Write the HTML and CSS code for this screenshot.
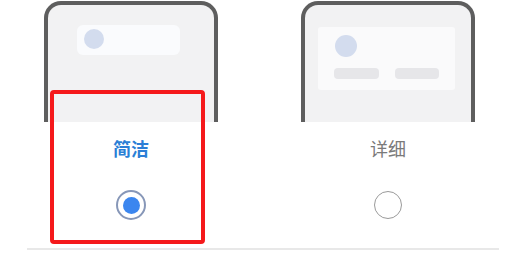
FILE: index.html
```html
<!DOCTYPE html>
<html lang="zh-CN">
<head>
<meta charset="utf-8">
<title>样式选择</title>
<link rel="stylesheet" href="styles.css">
</head>
<body>
<div class="stage">
  <div class="options">
    <div class="option">
      <div class="phone">
        <div class="pill"><span class="avatar small"></span></div>
      </div>
      <div class="label active">简洁</div>
      <div class="radio checked"><span class="dot"></span></div>
    </div>
    <div class="option">
      <div class="phone">
        <div class="card">
          <span class="avatar big"></span>
          <div class="bars"><span class="bar"></span><span class="bar"></span></div>
        </div>
      </div>
      <div class="label">详细</div>
      <div class="radio"></div>
    </div>
  </div>
  <div class="divider"></div>
  <div class="highlight"></div>
</div>
</body>
</html>
```

FILE: styles.css
```css
html, body {
  margin: 0;
  padding: 0;
  background: #ffffff;
  font-family: "Noto Sans CJK SC", "Noto Sans", sans-serif;
}
.stage {
  position: relative;
  width: 518px;
  height: 264px;
  overflow: hidden;
}
.options {
  display: flex;
  gap: 83px;
  padding-left: 44px;
  padding-top: 1px;
}
.option {
  width: 174px;
  display: flex;
  flex-direction: column;
  align-items: center;
}
.phone {
  box-sizing: border-box;
  width: 174px;
  height: 121px;
  border: 4px solid #5e5e5e;
  border-bottom: none;
  border-radius: 17px 17px 0 0;
  background: #f2f2f3;
  padding-top: 20px;
}
.pill {
  box-sizing: border-box;
  margin-left: 29px;
  width: 103px;
  height: 30px;
  border-radius: 6px;
  background: #fafbfd;
  padding: 4px 7px;
}
.avatar {
  display: block;
  border-radius: 50%;
  background: #d3dcee;
}
.avatar.small { width: 20px; height: 20px; }
.card {
  box-sizing: border-box;
  margin: 2px 0 0 13px;
  width: 137px;
  height: 63px;
  border-radius: 3px;
  background: #fafafb;
  padding: 8px 16px 0 17px;
}
.avatar.big { width: 22px; height: 22px; }
.bars {
  display: flex;
  gap: 16px;
  margin: 11px 0 0 -1px;
}
.bar {
  width: 46px;
  height: 11px;
  border-radius: 4px;
  background: #e6e6e9;
}
.label {
  margin-top: 17px;
  font-size: 18px;
  line-height: 18px;
  color: #7a7a7a;
}
.label.active {
  color: #2b7fd6;
  font-weight: 700;
}
.radio {
  box-sizing: border-box;
  margin-top: 34px;
  width: 28px;
  height: 28px;
  border-radius: 50%;
  border: 1.5px solid #9a9a9a;
  display: flex;
  align-items: center;
  justify-content: center;
}
.radio.checked {
  width: 30px;
  height: 30px;
  margin-top: 33px;
  border: 2px solid #8797b8;
}
.dot {
  width: 17px;
  height: 17px;
  border-radius: 50%;
  background: #3b86ef;
}
.divider {
  margin: 28px 0 0 27px;
  width: 472px;
  height: 2px;
  background: #e8e8e8;
}
.highlight {
  position: absolute;
  left: 50px;
  top: 90px;
  width: 155px;
  height: 154px;
  box-sizing: border-box;
  border: 4px solid #f5191b;
  border-radius: 4px;
}
```
